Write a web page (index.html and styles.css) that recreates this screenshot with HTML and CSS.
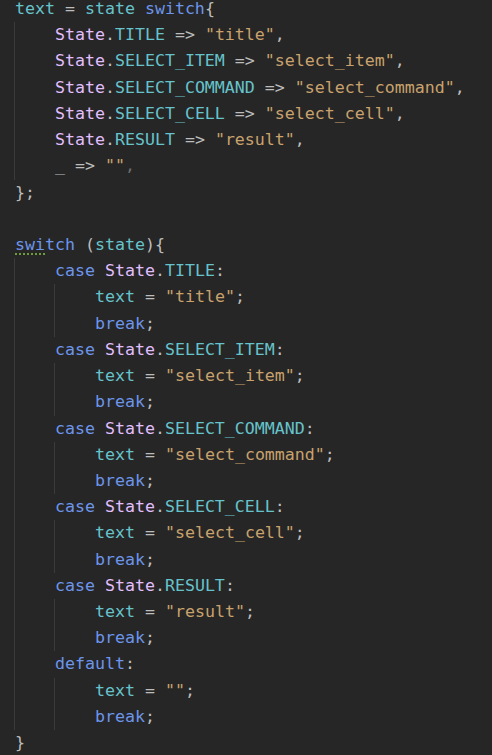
FILE: index.html
```html
<!DOCTYPE html>
<html>
<head>
<meta charset="utf-8">
<link rel="stylesheet" href="styles.css">
</head>
<body>
<div class="code">
<div class="line"><span class="f">text</span> <span class="op">=</span> <span class="f">state</span> <span class="kw">switch</span><span class="op">{</span></div>
<div class="block">
<div class="line"><span class="en">State</span><span class="op">.</span><span class="f">TITLE</span> <span class="op">=&gt;</span> <span class="s">"title"</span><span class="op">,</span></div>
<div class="line"><span class="en">State</span><span class="op">.</span><span class="f">SELECT_ITEM</span> <span class="op">=&gt;</span> <span class="s">"select_item"</span><span class="op">,</span></div>
<div class="line"><span class="en">State</span><span class="op">.</span><span class="f">SELECT_COMMAND</span> <span class="op">=&gt;</span> <span class="s">"select_command"</span><span class="op">,</span></div>
<div class="line"><span class="en">State</span><span class="op">.</span><span class="f">SELECT_CELL</span> <span class="op">=&gt;</span> <span class="s">"select_cell"</span><span class="op">,</span></div>
<div class="line"><span class="en">State</span><span class="op">.</span><span class="f">RESULT</span> <span class="op">=&gt;</span> <span class="s">"result"</span><span class="op">,</span></div>
<div class="line"><span class="op">_</span> <span class="op">=&gt;</span> <span class="s">""</span><span class="dim">,</span></div>
</div>
<div class="line"><span class="op">};</span></div>
<div class="line"> </div>
<div class="line"><span class="kw"><span class="warn">swi</span>tch</span> <span class="op">(</span><span class="f">state</span><span class="op">){</span></div>
<div class="block">
<div class="line"><span class="kw">case</span> <span class="en">State</span><span class="op">.</span><span class="f">TITLE</span><span class="op">:</span></div>
<div class="block">
<div class="line"><span class="f">text</span> <span class="op">=</span> <span class="s">"title"</span><span class="op">;</span></div>
<div class="line"><span class="kw">break</span><span class="op">;</span></div>
</div>
<div class="line"><span class="kw">case</span> <span class="en">State</span><span class="op">.</span><span class="f">SELECT_ITEM</span><span class="op">:</span></div>
<div class="block">
<div class="line"><span class="f">text</span> <span class="op">=</span> <span class="s">"select_item"</span><span class="op">;</span></div>
<div class="line"><span class="kw">break</span><span class="op">;</span></div>
</div>
<div class="line"><span class="kw">case</span> <span class="en">State</span><span class="op">.</span><span class="f">SELECT_COMMAND</span><span class="op">:</span></div>
<div class="block">
<div class="line"><span class="f">text</span> <span class="op">=</span> <span class="s">"select_command"</span><span class="op">;</span></div>
<div class="line"><span class="kw">break</span><span class="op">;</span></div>
</div>
<div class="line"><span class="kw">case</span> <span class="en">State</span><span class="op">.</span><span class="f">SELECT_CELL</span><span class="op">:</span></div>
<div class="block">
<div class="line"><span class="f">text</span> <span class="op">=</span> <span class="s">"select_cell"</span><span class="op">;</span></div>
<div class="line"><span class="kw">break</span><span class="op">;</span></div>
</div>
<div class="line"><span class="kw">case</span> <span class="en">State</span><span class="op">.</span><span class="f">RESULT</span><span class="op">:</span></div>
<div class="block">
<div class="line"><span class="f">text</span> <span class="op">=</span> <span class="s">"result"</span><span class="op">;</span></div>
<div class="line"><span class="kw">break</span><span class="op">;</span></div>
</div>
<div class="line"><span class="kw">default</span><span class="op">:</span></div>
<div class="block">
<div class="line"><span class="f">text</span> <span class="op">=</span> <span class="s">""</span><span class="op">;</span></div>
<div class="line"><span class="kw">break</span><span class="op">;</span></div>
</div>
</div>
<div class="line"><span class="op">}</span></div>
</div>
</body>
</html>
```
FILE: styles.css
```css
html, body {
  margin: 0;
  padding: 0;
  background: #262626;
  overflow: hidden;
}
.code {
  margin-top: -4px;
  padding-left: 15px;
  font-family: "DejaVu Sans Mono", "Liberation Mono", monospace;
  font-size: 16.6px;
  line-height: 26.22px;
  color: #bdbdbd;
}
.line {
  white-space: pre;
  height: 26.22px;
}
.block {
  margin-left: -1px;
  border-left: 1px solid #3b3b3b;
  padding-left: 40px;
}
.kw { color: #6c95eb; }
.f { color: #66c3cc; }
.en { color: #e1bfff; }
.s { color: #c9a26d; }
.op { color: #bdbdbd; }
.dim { color: #6e6e6e; }
.warn {
  background-image: repeating-linear-gradient(90deg, #6e9c3c 0 2px, transparent 2px 4px);
  background-size: 100% 2px;
  background-repeat: no-repeat;
  background-position: 0 100%;
  padding-bottom: 1px;
}
```
